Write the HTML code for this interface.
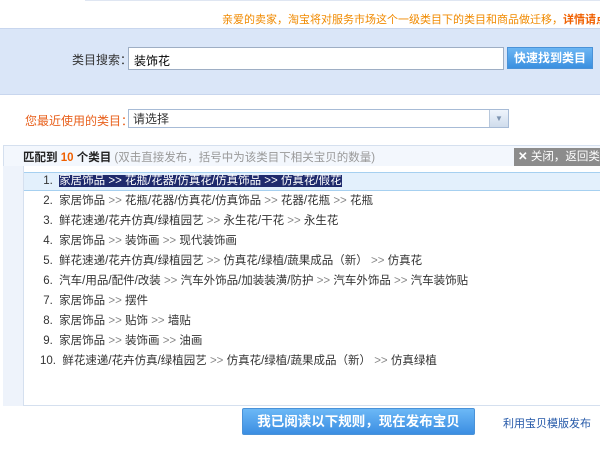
<!DOCTYPE html>
<html><head><meta charset="utf-8"><style>
*{margin:0;padding:0;box-sizing:border-box}
html,body{width:600px;height:453px;overflow:hidden}
body{background:#fff;font-family:"Liberation Sans","Noto Sans CJK SC",sans-serif;font-size:12px;color:#333;position:relative}
.a{position:absolute;white-space:nowrap;overflow:hidden}
</style></head><body>
<div class="a" style="left:85px;top:0;width:515px;height:1px;background:#dfe6f2"></div>
<div class="a" style="left:222px;top:11px;width:378px;color:#f08a00;font-size:11px">亲爱的卖家，淘宝将对服务市场这个一级类目下的类目和商品做迁移，<b style="color:#f06000">详情请点击</b></div>
<div class="a" style="left:0;top:28px;width:600px;height:67px;background:#dae6f8;border-top:1px solid #c8d6ee;border-bottom:1px solid #c8d6ee"></div>
<div class="a" style="left:72px;top:51px;font-size:12px">类目搜索：</div>
<div class="a" style="left:128px;top:47px;width:376px;height:23px;background:#fff;border:1px solid #9eaec4;padding:4px 5px;font-size:12px;color:#000">装饰花</div>
<div class="a" style="left:507px;top:47px;width:86px;height:22px;background:linear-gradient(#6cb6f4,#3a8fe0);border:1px solid #4a92d8;color:#fff;font-weight:bold;text-align:center;line-height:20px">快速找到类目</div>
<div class="a" style="left:25px;top:112px;color:#e8601c">您最近使用的类目：</div>
<div class="a" style="left:128px;top:109px;width:381px;height:19px;border:1px solid #a7bbd6;background:#fff;padding:1px 4px;line-height:16px">请选择</div>
<div class="a" style="left:489px;top:110px;width:19px;height:17px;background:linear-gradient(#eef4fc,#cfdcec);border-left:1px solid #b8c8dc;color:#7d93b0;font-size:8px;text-align:center;line-height:17px">▼</div>
<div class="a" style="left:3px;top:145px;width:600px;height:261px;border:1px solid #d5e0ef;background:#f3f7fd"></div>
<div class="a" style="left:3px;top:166px;width:21px;height:240px;background:#eef3fb;border-right:1px solid #d5e0ef"></div>
<div class="a" style="left:24px;top:166px;width:576px;height:239px;background:#fff"></div>
<div class="a" style="left:23px;top:149px;color:#222;font-size:11.5px"><b>匹配到 <span style="color:#f06000">10</span> 个类目</b> <span style="color:#999">(双击直接发布，括号中为该类目下相关宝贝的数量)</span></div>
<div class="a" style="left:514px;top:148px;width:86px;height:18px;background:#8c8c8c;color:#fff;line-height:18px;padding-left:4px;font-size:11.5px"><b>✕</b> 关闭，返回类目</div>
<div class="a" style="left:24px;top:172px;width:576px;height:19px;background:#e3f0fc;border-top:1px solid #a6d0f0;border-bottom:1px solid #a6d0f0"></div>
<div class="a" style="left:40px;top:171px;line-height:20px;color:#333;font-size:11.5px">
<div>&nbsp;1. &nbsp;<span style="background:#1f2a6c;color:#fff">家居饰品 &gt;&gt; 花瓶/花器/仿真花/仿真饰品 &gt;&gt; 仿真花/假花</span></div>
<div>&nbsp;2. &nbsp;家居饰品 <span style="color:#888">&gt;&gt;</span> 花瓶/花器/仿真花/仿真饰品 <span style="color:#888">&gt;&gt;</span> 花器/花瓶 <span style="color:#888">&gt;&gt;</span> 花瓶</div>
<div>&nbsp;3. &nbsp;鲜花速递/花卉仿真/绿植园艺 <span style="color:#888">&gt;&gt;</span> 永生花/干花 <span style="color:#888">&gt;&gt;</span> 永生花</div>
<div>&nbsp;4. &nbsp;家居饰品 <span style="color:#888">&gt;&gt;</span> 装饰画 <span style="color:#888">&gt;&gt;</span> 现代装饰画</div>
<div>&nbsp;5. &nbsp;鲜花速递/花卉仿真/绿植园艺 <span style="color:#888">&gt;&gt;</span> 仿真花/绿植/蔬果成品（新） <span style="color:#888">&gt;&gt;</span> 仿真花</div>
<div>&nbsp;6. &nbsp;汽车/用品/配件/改装 <span style="color:#888">&gt;&gt;</span> 汽车外饰品/加装装潢/防护 <span style="color:#888">&gt;&gt;</span> 汽车外饰品 <span style="color:#888">&gt;&gt;</span> 汽车装饰贴</div>
<div>&nbsp;7. &nbsp;家居饰品 <span style="color:#888">&gt;&gt;</span> 摆件</div>
<div>&nbsp;8. &nbsp;家居饰品 <span style="color:#888">&gt;&gt;</span> 贴饰 <span style="color:#888">&gt;&gt;</span> 墙贴</div>
<div>&nbsp;9. &nbsp;家居饰品 <span style="color:#888">&gt;&gt;</span> 装饰画 <span style="color:#888">&gt;&gt;</span> 油画</div>
<div>10. &nbsp;鲜花速递/花卉仿真/绿植园艺 <span style="color:#888">&gt;&gt;</span> 仿真花/绿植/蔬果成品（新） <span style="color:#888">&gt;&gt;</span> 仿真绿植</div>
</div>
<div class="a" style="left:242px;top:408px;width:233px;height:27px;background:linear-gradient(#6cb8f6,#3b8ee2);border:1px solid #4a92d8;border-radius:2px;color:#fff;font-weight:bold;font-size:13.5px;text-align:center;line-height:25px">我已阅读以下规则，现在发布宝贝</div>
<div class="a" style="left:503px;top:415px;color:#2458a8;font-size:11px">利用宝贝模版发布</div>
</body></html>
